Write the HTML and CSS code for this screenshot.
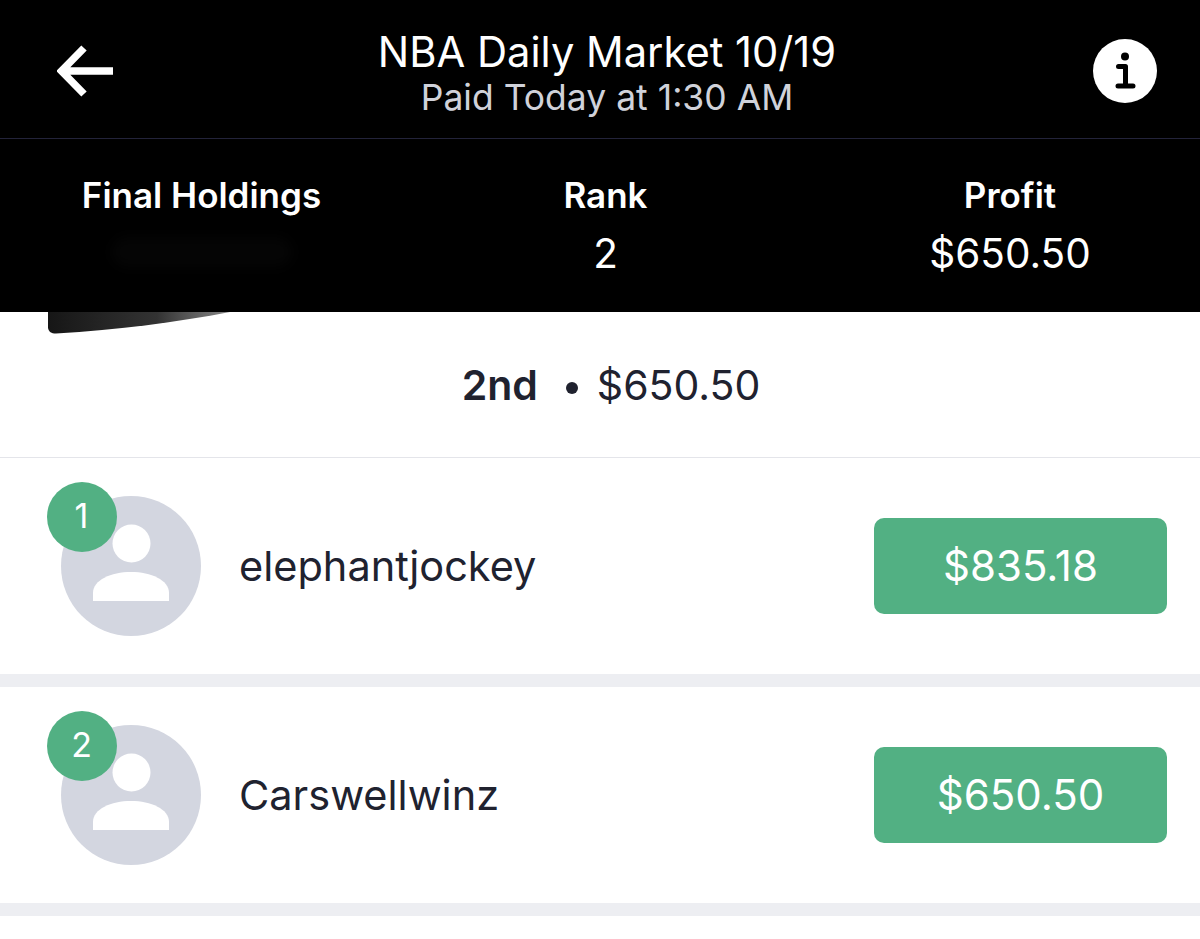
FILE: index.html
```html
<!DOCTYPE html>
<html lang="en">
<head>
    <meta charset="UTF-8">
    <meta name="viewport" content="width=device-width, initial-scale=1.0">
    <title>NBA Daily Market 10/19</title>
    <link rel="stylesheet" href="styles.css">
</head>
<body>
    <header class="topbar">
        <svg class="back" viewBox="0 0 56 52" width="56" height="52" aria-label="Back">
            <path d="M27 3 L4.500 26 L27 49 M5 26 H56" fill="none" stroke="#fff" stroke-width="7.500"/>
        </svg>
        <div class="titles">
            <h1 class="title">NBA Daily Market 10/19</h1>
            <p class="subtitle">Paid Today at 1:30 AM</p>
        </div>
        <svg class="info" viewBox="0 0 64 64" width="64" height="64" aria-label="Info">
            <circle cx="32" cy="32" r="32" fill="#fff"/>
            <circle cx="32" cy="17.500" r="4" fill="#000"/>
            <path d="M25.500 27.500 H32.500 V46.500 M25 47 H40" fill="none" stroke="#000" stroke-width="5" stroke-linecap="round" stroke-linejoin="round"/>
        </svg>
    </header>

    <section class="stats">
        <div class="stat">
            <h2 class="stat-label">Final Holdings</h2>
            <div class="stat-hidden"></div>
        </div>
        <div class="stat">
            <h2 class="stat-label">Rank</h2>
            <p class="stat-value">2</p>
        </div>
        <div class="stat stat-last">
            <h2 class="stat-label">Profit</h2>
            <p class="stat-value">$650.50</p>
        </div>
    </section>

    <main class="content">
        <svg class="smudge" viewBox="0 0 182 22" width="182" height="22">
            <defs>
                <linearGradient id="smudge-fill" x1="0" y1="0" x2="1" y2="0">
                    <stop offset="0" stop-color="#161616"/>
                    <stop offset="0.6" stop-color="#333"/>
                    <stop offset="1" stop-color="#888"/>
                </linearGradient>
            </defs>
            <path d="M0 0 H182 C130 10 70 18 8 21.500 C3 21.500 1 20 0 16 Z" fill="url(#smudge-fill)"/>
        </svg>

        <div class="result">
            <strong class="result-place">2nd</strong>
            <span class="result-dot"></span>
            <span class="result-amount">$650.50</span>
        </div>

        <div class="row">
            <div class="avatar">
                <svg viewBox="0 0 140 140" width="140" height="140">
                    <circle cx="70" cy="70" r="70" fill="#d3d6e0"/>
                    <circle cx="70.500" cy="47.500" r="19" fill="#fff"/>
                    <path d="M32 105 V97 C32 84 50 76 70 76 C90 76 108 84 108 97 V105 Z" fill="#fff"/>
                </svg>
                <span class="badge">1</span>
            </div>
            <span class="name">elephantjockey</span>
            <span class="prize">$835.18</span>
        </div>

        <div class="row">
            <div class="avatar">
                <svg viewBox="0 0 140 140" width="140" height="140">
                    <circle cx="70" cy="70" r="70" fill="#d3d6e0"/>
                    <circle cx="70.500" cy="47.500" r="19" fill="#fff"/>
                    <path d="M32 105 V97 C32 84 50 76 70 76 C90 76 108 84 108 97 V105 Z" fill="#fff"/>
                </svg>
                <span class="badge">2</span>
            </div>
            <span class="name">Carswellwinz</span>
            <span class="prize">$650.50</span>
        </div>
    </main>
</body>
</html>
```

FILE: styles.css
```css
* {
    box-sizing: border-box;
}

html, body {
    margin: 0;
    padding: 0;
}

body {
    width: 1200px;
    height: 939px;
    overflow: hidden;
    background: #fff;
    font-family: Inter, "Liberation Sans", sans-serif;
    color: #20222f;
}

.topbar {
    display: flex;
    justify-content: space-between;
    align-items: center;
    height: 139px;
    padding: 4px 43px 0 57px;
    background: #000;
    border-bottom: 1px solid #23233a;
}

.back {
    display: block;
}

.titles {
    margin: 8px 0 0 8px;
    text-align: center;
}

.title {
    margin: 0;
    font-size: 41.700px;
    line-height: 46px;
    font-weight: 400;
    color: #fff;
}

.subtitle {
    margin: 0;
    font-size: 35.500px;
    line-height: 46px;
    color: #d0d2da;
}

.info {
    display: block;
}

.stats {
    display: grid;
    grid-template-columns: 403px 405px 1fr;
    height: 173px;
    background: #000;
    text-align: center;
}

.stat {
    padding-top: 36px;
}

.stat-last {
    padding-left: 12px;
}

.stat-label {
    margin: 0;
    font-size: 35px;
    line-height: 40px;
    font-weight: 600;
    color: #fff;
}

.stat-value {
    margin: 16px 0 0;
    font-size: 40.500px;
    line-height: 46px;
    color: #fff;
}

.stat-hidden {
    width: 180px;
    height: 30px;
    margin: 22px auto 0;
    background: #050505;
    border-radius: 15px;
    filter: blur(6px);
}

.content {
    position: relative;
}

.smudge {
    position: absolute;
    left: 48px;
    top: 0;
    display: block;
}

.result {
    display: flex;
    justify-content: center;
    align-items: center;
    height: 146px;
    padding: 1px 0 0 22px;
    border-bottom: 1px solid #e4e5ea;
    font-size: 41px;
}

.result-place {
    font-weight: 600;
}

.result-dot {
    width: 12px;
    height: 12px;
    margin: 5px 19px 0 28px;
    border-radius: 50%;
    background: #20222f;
}

.row {
    display: flex;
    align-items: center;
    height: 229px;
    padding: 0 33px 0 61px;
    background: #fff;
    border-bottom: 13px solid #edeef2;
}

.avatar {
    position: relative;
    flex: none;
    width: 140px;
    height: 140px;
}

.avatar svg {
    display: block;
}

.badge {
    position: absolute;
    left: -14px;
    top: -14px;
    width: 70px;
    height: 70px;
    padding-right: 1px;
    border-radius: 50%;
    background: #52b083;
    color: #fff;
    font-size: 34px;
    line-height: 68px;
    text-align: center;
}

.name {
    flex: 1;
    margin-left: 38px;
    font-size: 41.500px;
}

.prize {
    flex: none;
    width: 293px;
    height: 96px;
    border-radius: 10px;
    background: #52b083;
    color: #fff;
    font-size: 42px;
    line-height: 96px;
    text-align: center;
}
```
